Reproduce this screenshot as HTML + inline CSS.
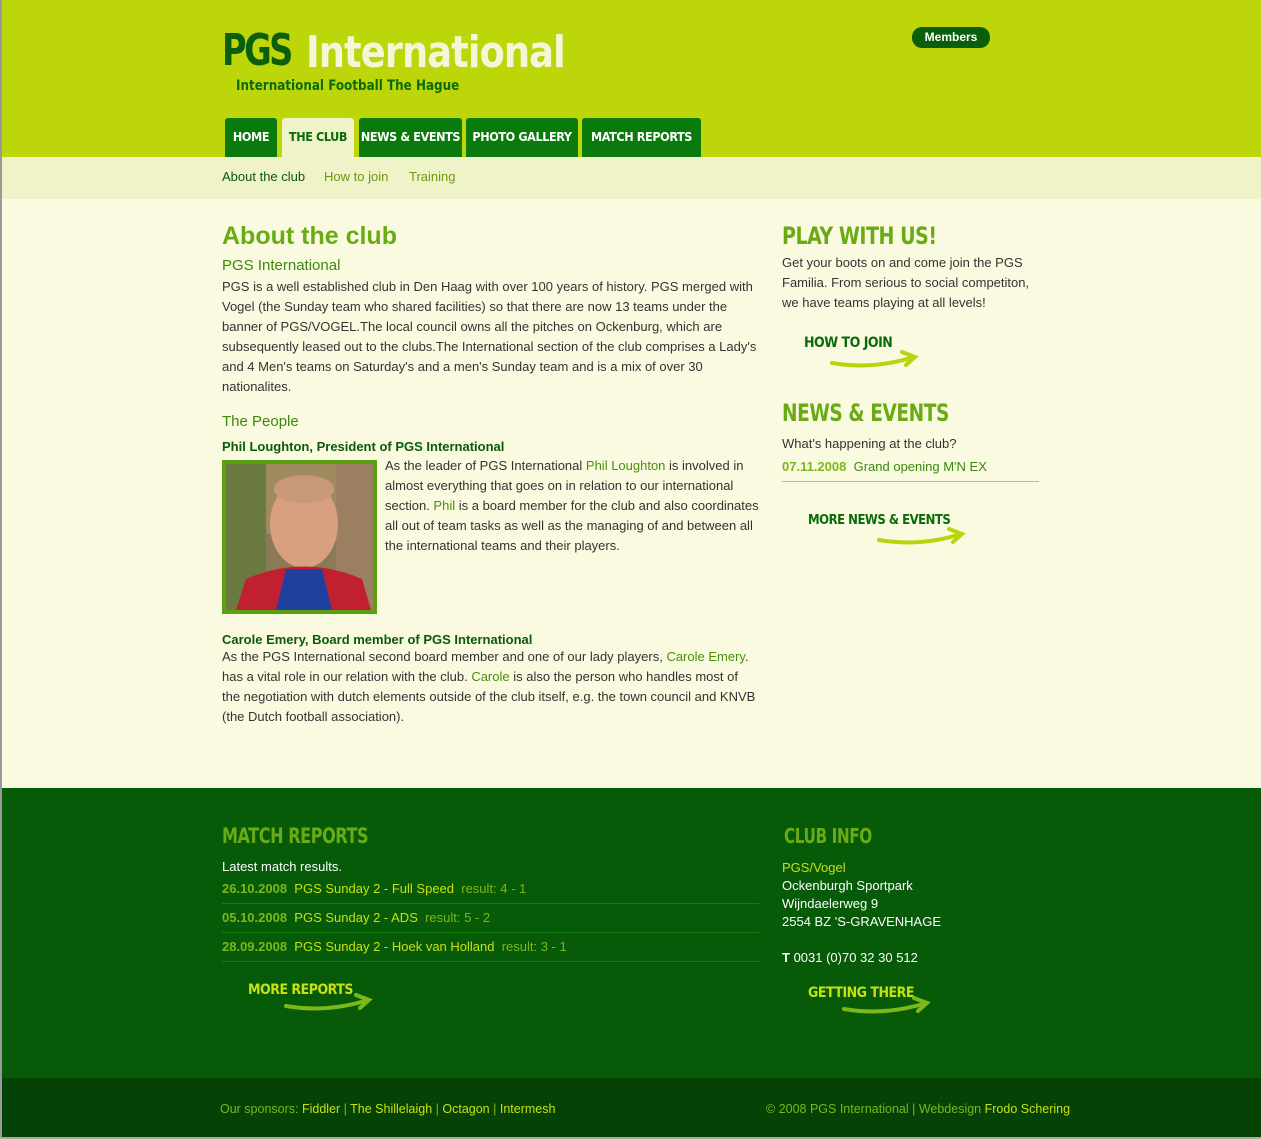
<!DOCTYPE html>
<html><head><meta charset="utf-8"><style>
*{margin:0;padding:0;box-sizing:border-box}
body{width:1261px;height:1139px;overflow:hidden;background:#fafae0;font-family:"Liberation Sans","DejaVu Sans",sans-serif;font-size:13px;color:#333;position:relative}
a{color:#4a8f0a;text-decoration:none}
.abs{position:absolute}
#top{position:absolute;left:0;top:0;width:1261px;height:157px;background:#bcd60a}
#sub{position:absolute;left:0;top:157px;width:1261px;height:42px;background:#f0f2c8}
.logo{font-family:"DejaVu Sans Condensed","DejaVu Sans",sans-serif;font-weight:bold;white-space:nowrap}
.tab{position:absolute;top:118px;height:39px;background:#0b7a0d;color:#fff;font-family:"DejaVu Sans Condensed",sans-serif;font-weight:bold;font-size:12.5px;text-align:center;line-height:38px;border-radius:3px 3px 0 0;white-space:nowrap;letter-spacing:-0.4px}
.grunge{font-family:"DejaVu Sans Condensed",sans-serif;font-weight:bold;letter-spacing:-0.5px;white-space:nowrap}
p{line-height:20px}
h3{font-size:13px;color:#0a5a0a;font-weight:bold}
#foot{position:absolute;left:0;top:788px;width:1261px;height:290px;background:#065a08}
#bot{position:absolute;left:0;top:1078px;width:1261px;height:61px;background:#044206}
.row{position:absolute;left:222px;width:537px;border-bottom:1px solid #11800f;height:29px;line-height:28px;color:#c8e010}
.row b{color:#7cb81a;font-weight:bold}
.row i{font-style:normal;color:#7cb81a}
.arrow{position:absolute}
</style></head><body>
<div id="top"></div>
<div id="sub"></div>
<div class="abs logo" style="left:222px;top:25px;font-size:44px;color:#0b5e0b;letter-spacing:-3px;transform:scaleX(0.85);transform-origin:left">PGS</div>
<div class="abs logo" style="left:306px;top:27px;font-size:44px;color:#f4f6d8;letter-spacing:-1px;transform:scaleX(0.93);transform-origin:left">International</div>
<div class="abs logo" style="left:236px;top:78px;font-size:14px;color:#0b6a0b;transform:scaleX(0.95);transform-origin:left">International Football The Hague</div>
<div class="abs" style="left:912px;top:27px;width:78px;height:21px;background:#0b5e0b;border-radius:10px;color:#fff;font-weight:bold;font-size:12px;text-align:center;line-height:21px">Members</div>
<div class="tab" style="left:225px;width:52px">HOME</div>
<div class="tab" style="left:282px;width:72px;background:#f0f2c8;color:#0b6a0b">THE CLUB</div>
<div class="tab" style="left:359px;width:103px">NEWS &amp; EVENTS</div>
<div class="tab" style="left:466px;width:112px">PHOTO GALLERY</div>
<div class="tab" style="left:582px;width:119px">MATCH REPORTS</div>
<div class="abs" style="left:222px;top:169px;font-size:13px;color:#0a5a0a">About the club</div>
<div class="abs" style="left:324px;top:169px;font-size:13px;color:#6a9a10">How to join</div>
<div class="abs" style="left:409px;top:169px;font-size:13px;color:#6a9a10">Training</div>

<div class="abs" style="left:222px;top:221px;width:540px">
<h1 style="font-size:25px;color:#6aab15;font-weight:bold;line-height:30px">About the club</h1>
<div style="font-size:15px;color:#3a8a0a;margin-top:6px">PGS International</div>
<p style="margin-top:3px">PGS is a well established club in Den Haag with over 100 years of history. PGS merged with Vogel (the Sunday team who shared facilities) so that there are now 13 teams under the banner of PGS/VOGEL.The local council owns all the pitches on Ockenburg, which are subsequently leased out to the clubs.The International section of the club comprises a Lady's and 4 Men's teams on Saturday's and a men's Sunday team and is a mix of over 30 nationalites.</p>
<div style="font-size:15px;color:#3a8a0a;margin-top:16px">The People</div>
<h3 style="margin-top:9px">Phil Loughton, President of PGS International</h3>
<div style="float:left;width:155px;height:154px;background:#5aa010;padding:4px;margin:6px 8px 0 0">
<svg width="147" height="146" viewBox="0 0 147 146"><rect width="147" height="146" fill="#8a7a55"/><rect x="0" y="0" width="147" height="70" fill="#a08a60"/><rect x="0" y="0" width="40" height="146" fill="#6a7a40"/><rect x="110" y="0" width="37" height="146" fill="#9a8060"/><ellipse cx="78" cy="60" rx="34" ry="44" fill="#d8a080"/><ellipse cx="78" cy="25" rx="30" ry="14" fill="#c89878"/><path d="M10 146 L20 115 Q78 90 136 115 L145 146Z" fill="#c02030"/><path d="M50 146 L60 105 L96 105 L106 146Z" fill="#2040a0"/></svg></div>
<p style="padding-top:2px">As the leader of PGS International <a>Phil Loughton</a> is involved in almost everything that goes on in relation to our international section. <a>Phil</a> is a board member for the club and also coordinates all out of team tasks as well as the managing of and between all the international teams and their players.</p>
<div style="clear:both"></div>
<h3 style="margin-top:18px">Carole Emery, Board member of PGS International</h3>
<p style="width:536px">As the PGS International second board member and one of our lady players, <a>Carole Emery</a>. has a vital role in our relation with the club. <a>Carole</a> is also the person who handles most of the negotiation with dutch elements outside of the club itself, e.g. the town council and KNVB (the Dutch football association).</p>
</div>

<div class="abs" style="left:782px;top:222px;width:255px">
<div class="grunge" style="font-size:24px;color:#6aab15;transform:scaleX(0.88);transform-origin:left">PLAY WITH US!</div>
<p style="margin-top:3px">Get your boots on and come join the PGS Familia. From serious to social competiton, we have teams playing at all levels!</p>
</div>
<div class="abs grunge" style="left:804px;top:335px;font-size:14px;color:#0b6a0b">HOW TO JOIN</div>
<svg class="arrow" style="left:828px;top:348px" width="92" height="22"><path d="M4 15 Q45 22 86 9 M74 4 L87 9 L78 17" stroke="#b8d40c" stroke-width="4" fill="none" stroke-linecap="round"/></svg>
<div class="abs grunge" style="left:782px;top:399px;font-size:24px;color:#6aab15;transform:scaleX(0.86);transform-origin:left">NEWS &amp; EVENTS</div>
<div class="abs" style="left:782px;top:436px">What's happening at the club?</div>
<div class="abs" style="left:782px;top:459px;width:257px;height:23px;border-bottom:1px solid #b8cc50"><b style="color:#7cb81a">07.11.2008</b>&nbsp; <a style="color:#3a8a0a">Grand opening M'N EX</a></div>
<div class="abs grunge" style="left:808px;top:513px;font-size:13px;color:#0b6a0b">MORE NEWS &amp; EVENTS</div>
<svg class="arrow" style="left:875px;top:525px" width="92" height="22"><path d="M4 15 Q45 22 86 9 M74 4 L87 9 L78 17" stroke="#b8d40c" stroke-width="4" fill="none" stroke-linecap="round"/></svg>

<div id="foot"></div>
<div id="bot"></div>
<div class="abs grunge" style="left:222px;top:824px;font-size:21px;color:#6aab15;transform:scaleX(0.85);transform-origin:left">MATCH REPORTS</div>
<div class="abs" style="left:222px;top:859px;color:#fff">Latest match results.</div>
<div class="row" style="top:875px"><b>26.10.2008</b>&nbsp; PGS Sunday 2 - Full Speed&nbsp; <i>result: 4 - 1</i></div>
<div class="row" style="top:904px"><b>05.10.2008</b>&nbsp; PGS Sunday 2 - ADS&nbsp; <i>result: 5 - 2</i></div>
<div class="row" style="top:933px"><b>28.09.2008</b>&nbsp; PGS Sunday 2 - Hoek van Holland&nbsp; <i>result: 3 - 1</i></div>
<div class="abs grunge" style="left:248px;top:982px;font-size:14px;color:#c8e010">MORE REPORTS</div>
<svg class="arrow" style="left:282px;top:993px" width="92" height="22"><path d="M4 13 Q45 20 86 7 M74 2 L87 7 L78 15" stroke="#7cb81a" stroke-width="4" fill="none" stroke-linecap="round"/></svg>
<div class="abs grunge" style="left:784px;top:824px;font-size:20px;color:#6aab15;transform:scaleX(0.85);transform-origin:left">CLUB INFO</div>
<div class="abs" style="left:782px;top:859px;color:#fff;line-height:18px"><span style="color:#c8e010;font-size:13px">PGS/Vogel</span><br>Ockenburgh Sportpark<br>Wijndaelerweg 9<br>2554 BZ 'S-GRAVENHAGE<br><br><b>T</b> 0031 (0)70 32 30 512</div>
<div class="abs grunge" style="left:808px;top:985px;font-size:14px;color:#c8e010">GETTING THERE</div>
<svg class="arrow" style="left:840px;top:996px" width="92" height="22"><path d="M4 13 Q45 20 86 7 M74 2 L87 7 L78 15" stroke="#7cb81a" stroke-width="4" fill="none" stroke-linecap="round"/></svg>
<div class="abs" style="left:220px;top:1102px;color:#7cb81a;font-size:12.5px">Our sponsors: <span style="color:#c8e010">Fiddler</span> | <span style="color:#c8e010">The Shillelaigh</span> | <span style="color:#c8e010">Octagon</span> | <span style="color:#c8e010">Intermesh</span></div>
<div class="abs" style="left:766px;top:1102px;color:#7cb81a;font-size:12.5px">© 2008 PGS International | Webdesign <span style="color:#c8e010">Frodo Schering</span></div>
<div class="abs" style="left:0;top:0;width:2px;height:1139px;background:#999"></div>
<div class="abs" style="left:0;top:1137px;width:1261px;height:2px;background:#aaa"></div>
</body></html>
